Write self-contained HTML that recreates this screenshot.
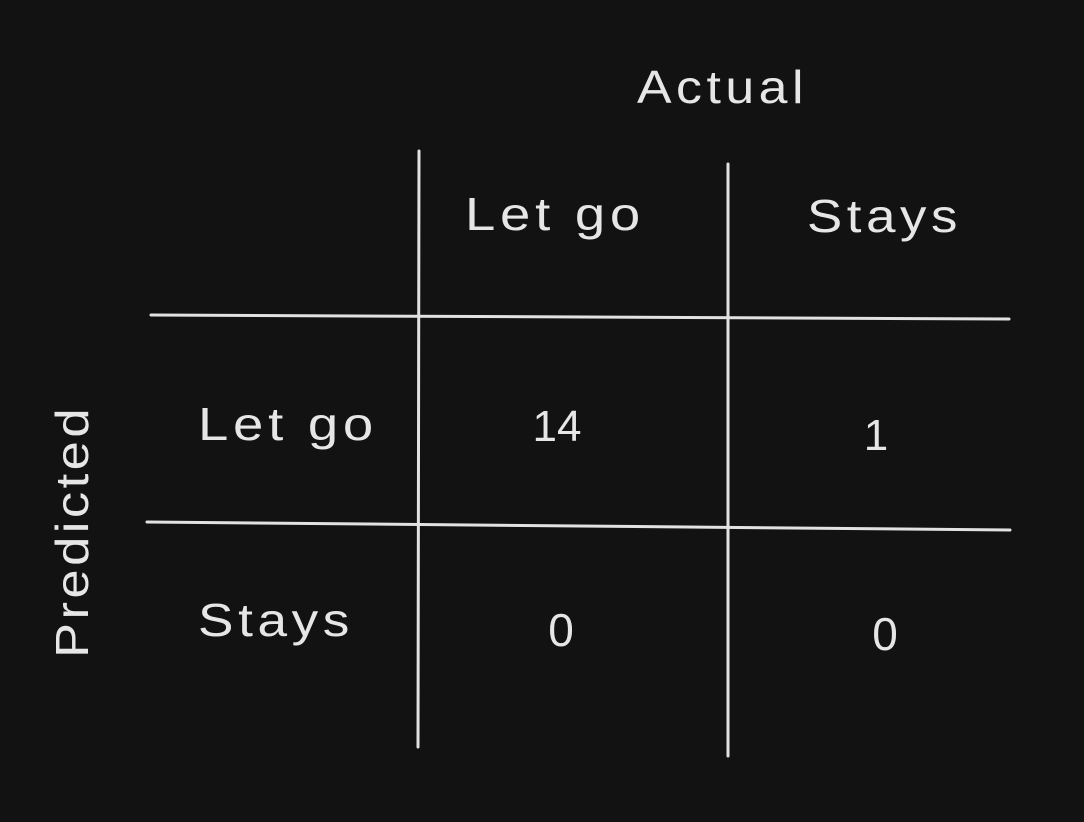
<!DOCTYPE html>
<html><head><style>
html,body{margin:0;padding:0;background:#121212;}
svg{display:block}
text{font-family:"Liberation Sans",sans-serif;fill:#e6e6e6;}
</style></head><body>
<svg width="1084" height="822" viewBox="0 0 1084 822">
<rect width="1084" height="822" fill="#121212"/>
<g stroke="#e2e2e2" stroke-width="3" stroke-linecap="round" fill="none">
<path d="M419 151 L418 747"/>
<path d="M728 164 L728 756"/>
<path d="M151 315 L1009 319"/>
<path d="M147 522 L1010 530"/>
</g>
<text x="637" y="103" font-size="46" letter-spacing="4" textLength="171" lengthAdjust="spacingAndGlyphs">Actual</text>
<text x="465" y="230" font-size="46" letter-spacing="4" textLength="180" lengthAdjust="spacingAndGlyphs">Let go</text>
<text x="807" y="232" font-size="46" letter-spacing="4" textLength="155" lengthAdjust="spacingAndGlyphs">Stays</text>
<text x="198" y="440" font-size="46" letter-spacing="4" textLength="180" lengthAdjust="spacingAndGlyphs">Let go</text>
<text x="198" y="636" font-size="46" letter-spacing="4" textLength="156" lengthAdjust="spacingAndGlyphs">Stays</text>
<text x="557" y="441" font-size="44" text-anchor="middle">14</text>
<text x="876" y="450" font-size="44" text-anchor="middle">1</text>
<text x="561" y="646" font-size="46" text-anchor="middle">0</text>
<text x="885" y="650" font-size="46" text-anchor="middle">0</text>
<text transform="translate(88,658) rotate(-90)" font-size="46" letter-spacing="3" textLength="253" lengthAdjust="spacingAndGlyphs">Predicted</text>
</svg>
</body></html>
